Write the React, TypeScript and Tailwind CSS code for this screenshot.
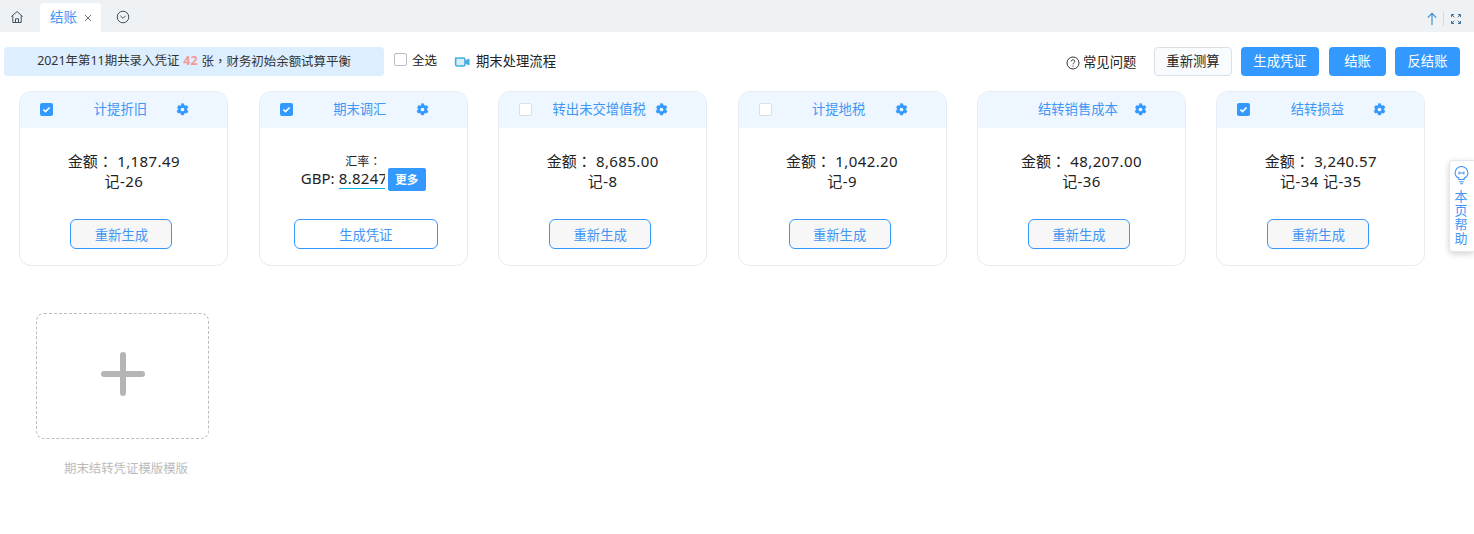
import React from "react";

const font = { fontFamily: '"Noto Sans", "Noto Sans CJK SC", sans-serif' };
const punct = { fontFamily: '"Noto Sans CJK TC", sans-serif' };

function Gear() {
  return (
    <svg viewBox="0 0 12 12" className="w-[13px] h-[13px] shrink-0" aria-hidden>
      <path
        d="M4.9.6h2.2l.35 1.5 1.05.6 1.5-.45 1.1 1.9-1.15 1.05v1.2l1.15 1.05-1.1 1.9-1.5-.45-1.05.6-.35 1.5H4.9l-.35-1.5-1.05-.6-1.5.45-1.1-1.9 1.15-1.05V5.2L1.35 4.15l1.1-1.9 1.5.45 1.05-.6z"
        fill="#3399ff"
        stroke="#3399ff"
        strokeWidth="0.5"
        strokeLinejoin="round"
      />
      <circle cx="6" cy="6" r="1.7" fill="#eef7ff" />
    </svg>
  );
}

function Check({ checked }: { checked: boolean }) {
  if (checked) {
    return (
      <span className="w-[13px] h-[13px] rounded-[2px] bg-[#3399ff] flex items-center justify-center shrink-0">
        <svg viewBox="0 0 10 10" className="w-[9px] h-[9px]">
          <path d="M1.6 5.2 4 7.4 8.4 2.8" fill="none" stroke="#fff" strokeWidth="1.8" />
        </svg>
      </span>
    );
  }
  return <span className="w-[13px] h-[13px] rounded-[2px] bg-white border border-[#dcdfe6] shrink-0" />;
}

type CardData = {
  title: string;
  check: boolean | null;
  amount?: string;
  voucher?: string;
};

const cards: CardData[] = [
  { title: "计提折旧", check: true, amount: "1,187.49", voucher: "记-26" },
  { title: "期末调汇", check: true },
  { title: "转出未交增值税", check: false, amount: "8,685.00", voucher: "记-8" },
  { title: "计提地税", check: false, amount: "1,042.20", voucher: "记-9" },
  { title: "结转销售成本", check: null, amount: "48,207.00", voucher: "记-36" },
  { title: "结转损益", check: true, amount: "3,240.57", voucher: "记-34 记-35" },
];

function Card({ c }: { c: CardData }) {
  const isRate = !c.amount;
  return (
    <div className="w-[209px] h-[175px] shrink-0 rounded-[12px] border border-[#e6ebf1] overflow-hidden bg-white flex flex-col">
      <div className="h-[36px] bg-[#eef7ff] flex items-center pb-[2px] pl-[20px] pr-[38px] shrink-0">
        {c.check === null ? <span className="w-[13px] h-[13px] shrink-0" /> : <Check checked={c.check} />}
        <div className="flex-1 text-center pl-[11px] text-[13.33px] leading-[20px] text-[#3f96f5] whitespace-nowrap">
          {c.title}
        </div>
        <Gear />
      </div>
      {isRate ? (
        <div className="flex flex-col items-center pt-[25px] h-[91px] text-[#222]">
          <div className="text-[12px] leading-[15px]">
            汇率<span style={punct}>：</span>
          </div>
          <div className="flex items-start text-[15px] leading-[21px] -mt-px">
            <span className="w-[34px] whitespace-nowrap">GBP:</span>
            <span className="ml-[4px] w-[46px] h-[21px] overflow-hidden border-b border-[#00b4e6] tracking-[0.3px]">8.8247</span>
            <span className="ml-[3px] w-[38px] h-[23px] rounded-[2px] bg-[#3399ff] text-white text-[11.5px] leading-[23px] font-bold text-center">
              更多
            </span>
          </div>
        </div>
      ) : (
        <div className="flex flex-col items-center pt-[23px] h-[91px] text-[15px] leading-[20px] text-[#222]">
          <div className="whitespace-pre">
            金额<span style={punct}>：</span>
            <span className="tracking-[0.4px]">{` ${c.amount}`}</span>
          </div>
          <div className="tracking-[0.4px]">{c.voucher}</div>
        </div>
      )}
      <div className="flex justify-center">
        <button
          className={`h-[30px] pt-[4px] rounded-[6px] border border-[#3399ff] text-[13.33px] text-[#3f96f5] ${
            isRate ? "w-[144px] ml-[5px] bg-white" : "w-[102px] mr-[5px] bg-[#f7f7f7]"
          }`}
        >
          {isRate ? "生成凭证" : "重新生成"}
        </button>
      </div>
    </div>
  );
}

function PrimaryButton({ label, w }: { label: string; w: string }) {
  return (
    <button className={`${w} h-[29px] rounded-[4px] bg-[#3399ff] text-white text-[13.33px]`}>{label}</button>
  );
}

export default function App() {
  return (
    <div className="relative w-[1474px] h-[534px] bg-white overflow-hidden text-[#222]" style={font}>
      {/* tab bar */}
      <div className="h-[32px] bg-[#eff2f5] flex items-end pl-[9px] pr-[13px]">
        <div className="h-[32px] w-[31px] flex items-center pt-[2px]">
          <svg viewBox="0 0 14 14" className="w-[14px] h-[14px] ml-px" fill="none" stroke="#44505c" strokeWidth="1">
            <path d="M1.3 6.6 7 1.6l5.7 5M2.8 5.6v6.9h8.4V5.6M5.5 12.5V8.8h3v3.7" />
          </svg>
        </div>
        <div className="w-[61px] h-[29px] bg-white rounded-t-[4px] flex items-center pl-[10px] text-[#3f96f5] text-[13.5px]">
          <span>结账</span>
          <svg viewBox="0 0 8 8" className="w-[8px] h-[8px] ml-[7px]" stroke="#6d7580" strokeWidth="1">
            <path d="M1 1l6 6M7 1 1 7" />
          </svg>
        </div>
        <div className="h-[32px] flex items-center ml-[15px] pt-[2px]">
          <svg viewBox="0 0 14 14" className="w-[14px] h-[14px]" fill="none" stroke="#44505c" strokeWidth="1">
            <circle cx="7" cy="7" r="5.8" />
            <path d="M4.4 5.8 7 8.4l2.6-2.6" />
          </svg>
        </div>
        <div className="ml-auto h-[32px] flex items-center pt-[6px]">
          <svg viewBox="0 0 12 14" className="w-[12px] h-[14px]" fill="none" stroke="#3f8fd8" strokeWidth="1.2">
            <path d="M6 13V1.6M1.8 5.6 6 1.4l4.2 4.2" />
          </svg>
          <span className="w-px h-[14px] bg-[#d5d9de] ml-[5px] mr-[7px]" />
          <svg viewBox="0 0 10 10" className="w-[10px] h-[10px]" fill="none" stroke="#3f6f95" strokeWidth="1">
            <path d="M.5 3V.5H3M7 .5h2.5V3M9.5 7v2.5H7M3 9.5H.5V7M3.2 3.2 1 1M6.8 3.2 9 1M6.8 6.8 9 9M3.2 6.8 1 9" />
          </svg>
        </div>
      </div>

      {/* toolbar */}
      <div className="flex items-center h-[29px] mt-[15px] pl-[4px] pr-[14px]">
        <div className="w-[380px] h-[29px] rounded-[4px] bg-[#ddeeff] flex items-center justify-center text-[12.45px] text-[#333]">
          <span>2021年第11期共录入凭证</span>
          <span className="mx-[4px] text-[#f39a96] font-bold">42</span>
          <span>
            张<span style={punct}>，</span>财务初始余额试算平衡
          </span>
        </div>
        <span className="ml-[10px] -translate-y-[2px] w-[13px] h-[13px] rounded-[2px] border border-[#b8bdc6] bg-white" />
        <span className="ml-[5px] text-[12.5px] text-[#222]">全选</span>
        <svg viewBox="0 0 16 12" className="ml-[17px] w-[16px] h-[12px]" fill="none" stroke="#45aee0" strokeWidth="1.6">
          <rect x="1.6" y="2" width="9.4" height="8" rx="1.6" fill="#d8eefa" />
          <path d="M11 5.2 15 3v6l-4-2.2" fill="#45aee0" strokeWidth="1" />
          <path d="M1 1.4 3 3" strokeWidth="1" />
        </svg>
        <span className="ml-[6px] text-[13.33px] text-[#222]">期末处理流程</span>

        <div className="ml-auto flex items-center">
          <svg viewBox="0 0 14 14" className="w-[14px] h-[14px] mt-[2px]" fill="none" stroke="#333" strokeWidth="1">
            <circle cx="7" cy="7" r="6" />
            <path d="M5.2 5.5c0-1 .8-1.7 1.8-1.7s1.8.7 1.8 1.6c0 1.4-1.8 1.4-1.8 2.9" />
            <path d="M7 9.6v1" />
          </svg>
          <span className="ml-[3px] w-[54px] text-[13.33px] mt-[2px] text-[#222] whitespace-nowrap">常见问题</span>
          <button className="ml-[17px] w-[78px] h-[29px] rounded-[4px] border border-[#dcdfe6] bg-[#f9fcff] text-[13.33px] text-[#222]">
            重新测算
          </button>
          <span className="ml-[9px]">
            <PrimaryButton label="生成凭证" w="w-[78px]" />
          </span>
          <span className="ml-[10px]">
            <PrimaryButton label="结账" w="w-[57px]" />
          </span>
          <span className="ml-[9px]">
            <PrimaryButton label="反结账" w="w-[65px]" />
          </span>
        </div>
      </div>

      {/* cards */}
      <div className="flex gap-[30.4px] pl-[19.4px] mt-[15px]">
        {cards.map((c) => (
          <Card key={c.title} c={c} />
        ))}
      </div>

      {/* template add */}
      <div className="ml-[36px] mt-[47px] w-[173px]">
        <div className="h-[126px] rounded-[8px] border border-dashed border-[#bdbdbd] flex items-center justify-center">
          <svg viewBox="0 0 46 46" className="w-[46px] h-[46px] -mt-[4px] ml-px" stroke="#b5b5b5" strokeWidth="6" strokeLinecap="round">
            <path d="M23 4v38M4 23h38" />
          </svg>
        </div>
        <div className="mt-[21px] pl-[7px] text-center text-[12.4px] leading-[18px] text-[#bbbbbb] whitespace-nowrap">
          期末结转凭证模版模版
        </div>
      </div>

      {/* floating help */}
      <div className="absolute right-0 top-[160px] w-[25px] h-[92px] bg-white border border-r-0 border-[#e3e6ea] rounded-l-[4px] shadow-[0_2px_6px_rgba(0,0,0,0.18)] flex flex-col items-center pt-[5px] pr-[2px] text-[#3f96f5] text-[13px] leading-[14px]">
        <svg viewBox="0 0 16 20" className="w-[15px] h-[19px] mb-[4px] shrink-0" fill="none" stroke="#3f96f5" strokeWidth="1.2">
          <path d="M5.2 14.2v-1.4C3 11.7 1.2 9.9 1.2 7.2a6.8 6.8 0 0 1 13.6 0c0 2.7-1.8 4.5-4 5.6v1.4z" />
          <path d="M5.6 16.6h4.8M6.4 18.8h3.2M5.4 5.6v3.4M10.6 5.6v3.4M5.4 7.3h5.2" />
        </svg>
        <span className="w-[13px] break-all text-center">本页帮助</span>
      </div>
    </div>
  );
}
